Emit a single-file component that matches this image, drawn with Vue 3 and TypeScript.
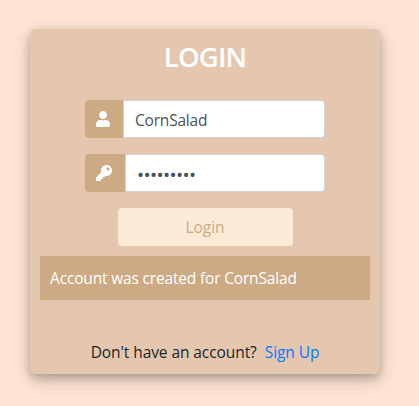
<script setup lang="ts">
import { ref } from 'vue'

const username = ref<string>('CornSalad')
const password = ref<string>('saladcorn')
const message = ref<string>('Account was created for CornSalad')

function submit(): void {
  message.value = `Welcome back, ${username.value}`
}
</script>

<template>
  <main class="page">
    <section class="card">
      <h3 class="title">LOGIN</h3>
      <form class="form" @submit.prevent="submit">
        <div class="group">
          <span class="addon">
            <svg class="icon icon-user" viewBox="0 0 448 512" aria-hidden="true">
              <path d="M224 256c70.7 0 128-57.300 128-128S294.700 0 224 0 96 57.300 96 128s57.300 128 128 128zm89.600 32h-16.700c-22.200 10.200-46.900 16-72.900 16s-50.600-5.800-72.900-16h-16.700C60.200 288 0 348.200 0 422.400V464c0 26.500 21.500 48 48 48h352c26.500 0 48-21.500 48-48v-41.600c0-74.200-60.200-134.400-134.400-134.400z" />
            </svg>
          </span>
          <input v-model="username" class="field" type="text" name="username" aria-label="Username" />
        </div>
        <div class="group">
          <span class="addon">
            <svg class="icon icon-key" viewBox="0 0 512 512" aria-hidden="true">
              <path d="M512 176.001C512 273.203 433.202 352 336 352c-11.220 0-22.190-1.062-32.827-3.069l-24.012 27.014A23.999 23.999 0 0 1 261.223 384H224v40c0 13.255-10.745 24-24 24h-40v40c0 13.255-10.745 24-24 24H24c-13.255 0-24-10.745-24-24v-78.059c0-6.365 2.529-12.470 7.029-16.971l161.802-161.802C163.108 213.814 160 195.271 160 176 160 78.798 238.797.001 335.999 0 433.488-.001 512 78.511 512 176.001zM336 128c0 26.510 21.490 48 48 48s48-21.490 48-48-21.490-48-48-48-48 21.490-48 48z" />
            </svg>
          </span>
          <input v-model="password" class="field field-password" type="password" name="password" aria-label="Password" />
        </div>
        <button class="submit" type="submit">Login</button>
      </form>
      <p class="message">{{ message }}</p>
      <p class="signup"><span class="question">Don't have an account?</span><a class="link" href="#">Sign Up</a></p>
    </section>
  </main>
</template>

<style>
body {
  margin: 0;
  background: #ffe5d4;
}
</style>

<style scoped>
.page {
  box-sizing: border-box;
  height: 406px;
  padding: 29px 39px 0 30px;
  overflow: hidden;
  background: #ffe5d4;
  color: #212529;
  font-family: "Open Sans", "Noto Sans", sans-serif;
  font-size: 15.5px;
  line-height: 24px;
}

.card {
  box-sizing: border-box;
  display: flex;
  flex-direction: column;
  height: 345px;
  padding: 10px;
  border-radius: 5px;
  background: #e5c7af;
  box-shadow: 0 4px 8px 0 rgba(0, 0, 0, 0.2), 0 6px 20px 0 rgba(0, 0, 0, 0.19);
}

.title {
  margin: 0;
  color: #fff;
  font-size: 27.5px;
  font-weight: 600;
  line-height: 35px;
  letter-spacing: -0.8px;
  text-align: center;
}

.form {
  display: flex;
  flex-direction: column;
  align-items: center;
  gap: 16px;
  padding-top: 26px;
}

.group {
  display: flex;
  width: 240px;
  height: 38px;
}

.addon {
  display: flex;
  align-items: center;
  padding: 0 13px 0 11px;
  border-radius: 4px 0 0 4px;
  background: #ccaa84;
  color: #fff;
}

.icon {
  display: block;
  height: 16px;
  fill: currentColor;
}

.icon-user {
  width: 14px;
}

.icon-key {
  width: 16px;
}

.field {
  box-sizing: border-box;
  flex: 1;
  min-width: 0;
  height: 38px;
  margin: 0;
  padding: 8px 11px 6px;
  border: 1px solid #ced4da;
  border-radius: 0 4px 4px 0;
  outline: none;
  background: #fff;
  color: #495057;
  font: inherit;
  letter-spacing: -0.2px;
}

.field-password {
  padding: 8px 11px 4px;
  font-size: 19px;
  letter-spacing: -0.65px;
}

.submit {
  width: 175px;
  height: 38px;
  padding: 0;
  border: 0;
  border-radius: 4px;
  background: #fdebd7;
  color: #ccaa84;
  font: inherit;
}

.message {
  margin: 10px 0 0;
  padding: 10px;
  background: #ccaa84;
  color: #fff;
  letter-spacing: -0.17px;
}

.signup {
  display: flex;
  justify-content: center;
  gap: 8px;
  margin: 40px 0 0;
  letter-spacing: -0.08px;
}

.link {
  color: #007bff;
  text-decoration: none;
}
</style>
